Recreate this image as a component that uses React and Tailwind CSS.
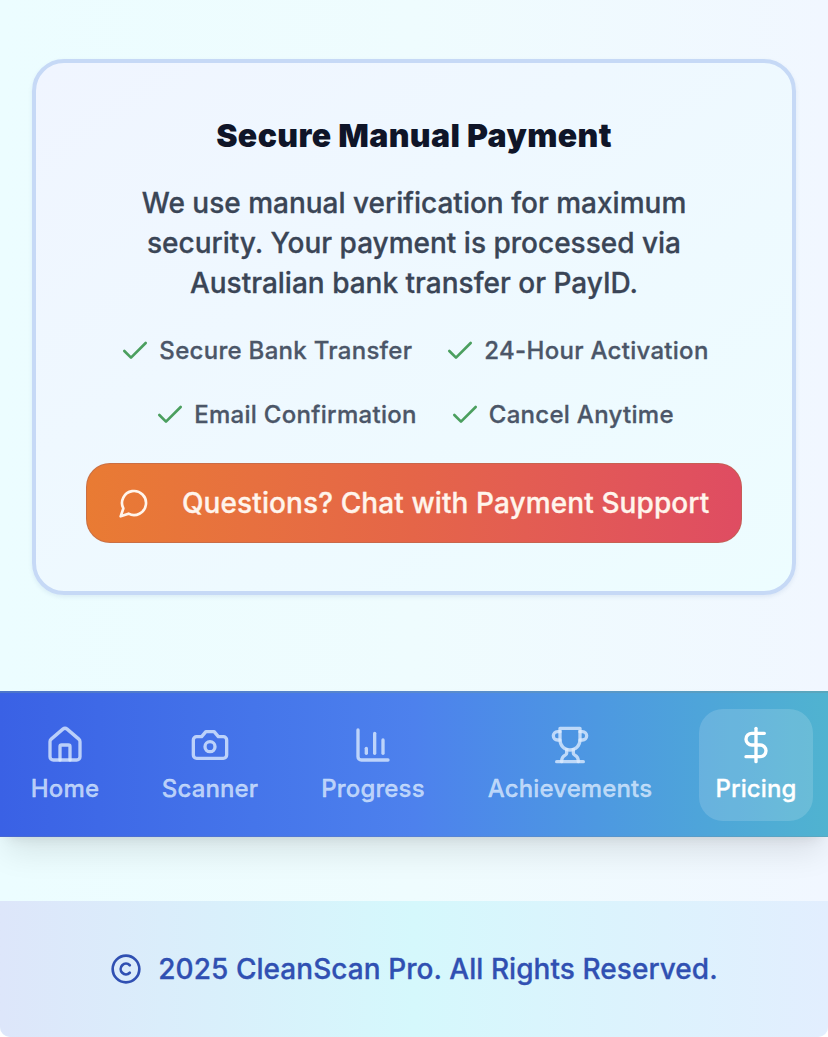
import { Check, ChartColumn, Copyright, DollarSign, House } from "lucide-react";

function Camera() {
  return (
    <svg className="size-10" viewBox="0 0 24 24" fill="none" stroke="currentColor" strokeWidth="2" strokeLinecap="round" strokeLinejoin="round">
      <path d="M14.5 4h-5L7 7H4a2 2 0 0 0-2 2v9a2 2 0 0 0 2 2h16a2 2 0 0 0 2-2V9a2 2 0 0 0-2-2h-3l-2.5-3z" />
      <circle cx="12" cy="13" r="3" />
    </svg>
  );
}

function Trophy() {
  return (
    <svg className="size-10" viewBox="0 0 24 24" fill="none" stroke="currentColor" strokeWidth="2" strokeLinecap="round" strokeLinejoin="round">
      <path d="M6 9H4.5a2.5 2.5 0 0 1 0-5H6" />
      <path d="M18 9h1.5a2.5 2.5 0 0 0 0-5H18" />
      <path d="M4 22h16" />
      <path d="M10 14.66V17c0 .55-.47.98-.97 1.21C7.85 18.75 7 20.24 7 22" />
      <path d="M14 14.66V17c0 .55.47.98.97 1.21C16.15 18.75 17 20.24 17 22" />
      <path d="M18 2H6v7a6 6 0 0 0 12 0V2Z" />
    </svg>
  );
}

function MessageCircle() {
  return (
    <svg className="size-8" viewBox="0 0 24 24" fill="none" stroke="currentColor" strokeWidth="2" strokeLinecap="round" strokeLinejoin="round">
      <path d="M7.9 20A9 9 0 1 0 4 16.1L2 22Z" />
    </svg>
  );
}

function Feature({ children }) {
  return (
    <li className="flex h-8 items-center gap-2">
      <Check className="size-8 shrink-0 text-[#4b9f5f]" />
      <span className="whitespace-nowrap tracking-[0.29px] [-webkit-text-stroke:0.3px]">{children}</span>
    </li>
  );
}

function NavItem({ icon, label, className }) {
  return (
    <a className={`flex h-28 flex-col items-center rounded-3xl pt-4 ${className}`}>
      {icon}
      <span className="mt-2 whitespace-nowrap text-2xl font-medium tracking-[0.13px] [-webkit-text-stroke:0.3px]">{label}</span>
    </a>
  );
}

export default function App() {
  return (
    <div className="h-[1037px] w-[828px] overflow-hidden bg-white font-['Inter','Liberation_Sans',sans-serif]">
      <div className="flex h-full flex-col overflow-hidden rounded-b-[10px] bg-linear-to-r from-[#ecfdff] via-[#effcfe] to-[#f1f7ff]">
        <main className="px-8 pt-[59px]">
          <section className="flex h-[536px] flex-col items-center rounded-[32px] border-4 border-[#c6d9f6] bg-linear-to-br from-[#f0f5ff] to-[#edfdff] pt-[53px] shadow-[0_2px_4px_rgba(60,100,160,0.1)]">
            <h2 className="whitespace-nowrap text-[32px] leading-10 font-black tracking-[0.37px] text-[#0f1528]">Secure Manual Payment</h2>
            <p className="mt-[27px] text-center text-[28px] leading-10 font-medium whitespace-nowrap text-[#3a4556] [-webkit-text-stroke:0.3px]">
              We use manual verification for maximum
              <br />
              security. Your payment is processed via
              <br />
              Australian bank transfer or PayID.
            </p>
            <div className="mt-8 flex flex-col items-center gap-8 text-2xl font-medium text-[#4b5668]">
              <ul className="flex gap-8">
                <Feature>Secure Bank Transfer</Feature>
                <Feature>24-Hour Activation</Feature>
              </ul>
              <ul className="flex gap-8">
                <Feature>Email Confirmation</Feature>
                <Feature>Cancel Anytime</Feature>
              </ul>
            </div>
            <button className="mt-8 flex h-20 w-[656px] items-center gap-8 rounded-[24px] border border-[#b5694f]/60 bg-linear-to-r from-[#e97b33] via-[#e56548] to-[#df4c62] bg-origin-border pl-[31px] text-[28px] font-medium text-[#fff5ec]">
              <MessageCircle />
              <span className="whitespace-nowrap tracking-[0.1px] [-webkit-text-stroke:0.3px]">Questions? Chat with Payment Support</span>
            </button>
          </section>
        </main>
        <nav className="mt-24 flex h-[146px] shrink-0 justify-between border-t-2 border-b border-t-[#6b96a0]/40 border-b-[#808080]/20 bg-linear-to-r from-[#3a61e5] via-[#4d81ed] to-[#50b3d0] bg-origin-border px-[15px] pt-4 shadow-[0_20px_30px_-6px_rgba(0,0,0,0.1),0_8px_12px_-8px_rgba(0,0,0,0.1)]">
          <NavItem icon={<House className="size-10" />} label="Home" className="w-[100px] text-[#dbeafe]/80" />
          <NavItem icon={<Camera />} label="Scanner" className="w-32 text-[#dbeafe]/80" />
          <NavItem icon={<ChartColumn className="size-10" />} label="Progress" className="w-[136px] text-[#dbeafe]/80" />
          <NavItem icon={<Trophy />} label="Achievements" className="w-[196px] text-[#dbeafe]/80" />
          <NavItem icon={<DollarSign className="size-10" />} label="Pricing" className="w-[114px] bg-white/15 text-white" />
        </nav>
        <footer className="mt-16 flex h-[136px] shrink-0 items-center justify-center gap-4 bg-linear-to-r from-[#dde6fa] via-[#d5f8fc] to-[#e2eefe] text-[28px] font-medium text-[#3050b2]">
          <Copyright className="size-8" />
          <span className="whitespace-nowrap tracking-[0.05px] [-webkit-text-stroke:0.3px]">2025 CleanScan Pro. All Rights Reserved.</span>
        </footer>
      </div>
    </div>
  );
}
